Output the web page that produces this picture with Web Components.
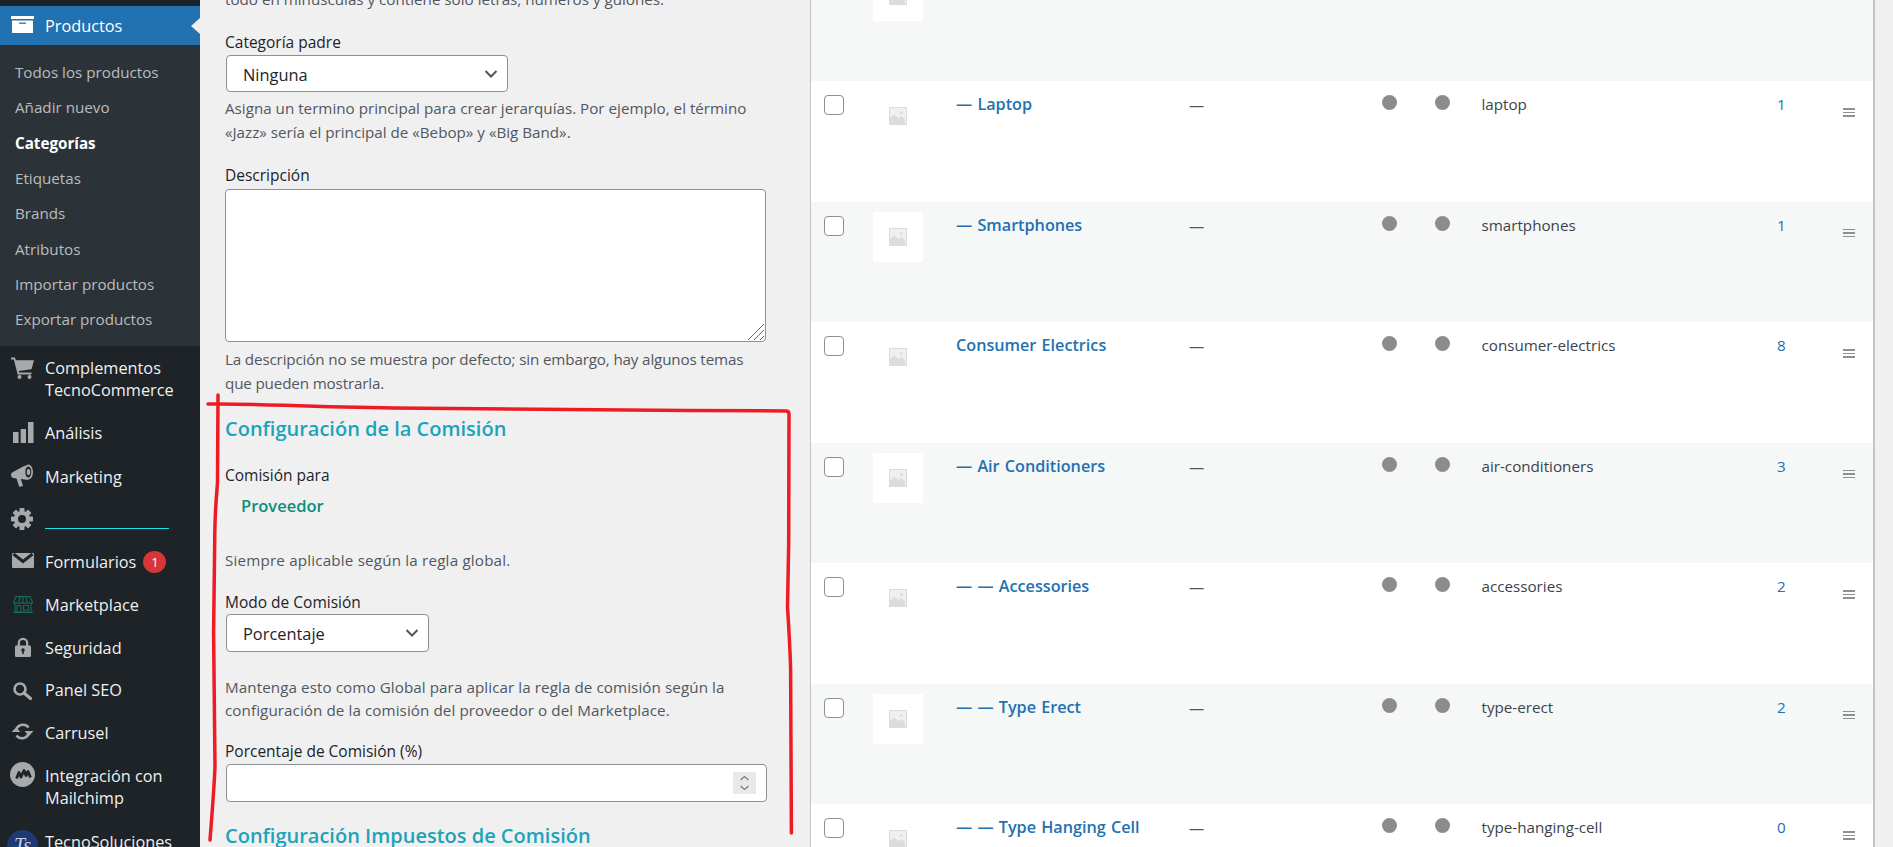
<!DOCTYPE html>
<html lang="es"><head><meta charset="utf-8"><title>Categorías</title>
<style>
html,body{margin:0;padding:0;height:847px;overflow:hidden;background:#f0f0f1;font-family:"Open Sans","Noto Sans",sans-serif;}
</style></head><body>
<app-shell>
  <wp-sidebar slot="side">
    <menu-head>Productos</menu-head>
    <wp-submenu>
      <sub-item>Todos los productos</sub-item><sub-item>Añadir nuevo</sub-item><sub-item current>Categorías</sub-item><sub-item>Etiquetas</sub-item><sub-item>Brands</sub-item><sub-item>Atributos</sub-item><sub-item>Importar productos</sub-item><sub-item>Exportar productos</sub-item>
    </wp-submenu>
    <menu-item icon="cart" h="65">Complementos<br>TecnoCommerce</menu-item>
    <menu-item icon="bars" h="44">Análisis</menu-item>
    <menu-item icon="mega" h="44">Marketing</menu-item>
    <menu-item icon="gear" h="42"><cyan-rule></cyan-rule></menu-item>
    <menu-item icon="mail" h="42">Formularios<count-badge>1</count-badge></menu-item>
    <menu-item icon="store" h="43">Marketplace</menu-item>
    <menu-item icon="lock" h="43">Seguridad</menu-item>
    <menu-item icon="search" h="42">Panel SEO</menu-item>
    <menu-item icon="sync" h="44">Carrusel</menu-item>
    <menu-item icon="chimp" h="64">Integración con<br>Mailchimp</menu-item>
    <menu-item icon="ts" h="46">TecnoSoluciones</menu-item>
  </wp-sidebar>
  <term-form slot="form">
    <f-hint style="margin-top:-13px;height:24px">todo en minúsculas y contiene solo letras, números y guiones.</f-hint>
    <f-label style="margin-top:21px">Categoría padre</f-label>
    <f-select style="margin-top:3px;width:282px;height:37px">Ninguna</f-select>
    <f-hint style="margin-top:4px">Asigna un termino principal para crear jerarquías. Por ejemplo, el término «Jazz» sería el principal de «Bebop» y «Big Band».</f-hint>
    <f-label style="margin-top:21px">Descripción</f-label>
    <f-area style="margin-top:4px"></f-area>
    <f-hint style="margin-top:5px;letter-spacing:-.15px">La descripción no se muestra por defecto; sin embargo, hay algunos temas que pueden mostrarla.</f-hint>
    <f-heading style="margin-top:20px">Configuración de la Comisión</f-heading>
    <f-label style="margin-top:22px">Comisión para</f-label>
    <f-tag style="margin-top:11px">Proveedor</f-tag>
    <f-hint style="margin-top:32px;letter-spacing:.18px">Siempre aplicable según la regla global.</f-hint>
    <f-label style="margin-top:20px">Modo de Comisión</f-label>
    <f-select style="margin-top:2px;width:203px;height:38px">Porcentaje</f-select>
    <f-hint tight style="margin-top:23.500px;letter-spacing:.08px">Mantenga esto como Global para aplicar la regla de comisión según la configuración de la comisión del proveedor o del Marketplace.</f-hint>
    <f-label style="margin-top:19.500px">Porcentaje de Comisión (%)</f-label>
    <f-number style="margin-top:3px"></f-number>
    <f-heading style="margin-top:20px">Configuración Impuestos de Comisión</f-heading>
  </term-form>
  <term-table slot="table">
    <cat-row alt thumb-only></cat-row>
    <cat-row name="— Laptop" slug="laptop" count="1"></cat-row>
    <cat-row alt name="— Smartphones" slug="smartphones" count="1"></cat-row>
    <cat-row name="Consumer Electrics" slug="consumer-electrics" count="8"></cat-row>
    <cat-row alt name="— Air Conditioners" slug="air-conditioners" count="3"></cat-row>
    <cat-row name="— — Accessories" slug="accessories" count="2"></cat-row>
    <cat-row alt name="— — Type Erect" slug="type-erect" count="2"></cat-row>
    <cat-row name="— — Type Hanging Cell" slug="type-hanging-cell" count="0"></cat-row>
  </term-table>
  <red-scribble slot="mark"></red-scribble>
</app-shell>
<script>
const G='#a7aaad',D='#1d2327';
const ICONS={
 cart:[23,22,10.5+0,`<path fill="${G}" d="M0 .5h4l.8 2.800H23l-2.500 9L7.800 14l.4 1.500H20.500v2H6.700L2.800 2.500H0z"/><circle cx="8.500" cy="20" r="2" fill="${G}"/><circle cx="18.500" cy="20" r="2" fill="${G}"/>`],
 bars:[21,21,0,`<path fill="${G}" d="M0 10h5.500v11H0zM7.700 7h5.300v14H7.700zM15 0h5.500v21H15z"/>`],
 mega:[22,23,0,`<path fill="${G}" d="M0 10.500Q0 9 1.500 8.300L14 1.500l3 14.500-7.200-1 2.200 7-3.800.8L5.500 14.500 2 14Q0 13 0 10.500z"/><ellipse cx="17.300" cy="8" rx="4.700" ry="7.500" fill="${G}"/><ellipse cx="17.300" cy="8" rx="3" ry="5.600" fill="${D}"/><ellipse cx="17.500" cy="8" rx="1.800" ry="3" fill="${G}"/>`],
 gear:[22,22,0,`<g fill="${G}"><circle cx="11" cy="11" r="8"/><rect x="8.500" y="0" width="5" height="22" rx=".8"/><rect x="8.500" y="0" width="5" height="22" rx=".8" transform="rotate(45 11 11)"/><rect x="8.500" y="0" width="5" height="22" rx=".8" transform="rotate(90 11 11)"/><rect x="8.500" y="0" width="5" height="22" rx=".8" transform="rotate(135 11 11)"/></g><circle cx="11" cy="11" r="4" fill="${D}"/>`],
 mail:[22,15,0,`<rect width="22" height="15" rx="1" fill="${G}"/><path d="M1.500 1l9.500 7.500L20.500 1" fill="none" stroke="${D}" stroke-width="3"/>`],
 store:[20,17,0,`<g fill="none" stroke="#1a6b55" stroke-width="1.100"><path d="M3 .6h14l2.600 5.900q-2 1.800-3.200 0-1.600 1.800-3.200 0-1.500 1.800-3.200 0-1.700 1.800-3.200 0-1.600 1.800-3.200 0-1.200 1.800-3.200 0zM7 .6 5.800 6.500M10 .6v5.900M13 .6l1.200 5.900M2 8v8h16V8M0 16.500h20M4 9.500h4v6.500H4zM10.500 9.500h5v4.500h-5z"/></g>`],
 lock:[16,20,0,`<path d="M3.800 10V6a4.200 4.200 0 0 1 8.400 0v4" fill="none" stroke="${G}" stroke-width="2.200"/><rect y="8.500" width="16" height="11.500" rx="1.200" fill="${G}"/><circle cx="8" cy="13" r="1.800" fill="${D}"/><rect x="7.200" y="13" width="1.600" height="4" fill="${D}"/>`],
 search:[19,18,0,`<circle cx="7" cy="7" r="5.500" fill="none" stroke="${G}" stroke-width="2.600"/><path d="M11 11l6.500 5.500" stroke="${G}" stroke-width="3.200" stroke-linecap="round"/>`],
 sync:[23,17,0,`<path d="M5 8A7 7 0 0 1 17.500 4.500M18 9A7 7 0 0 1 5.500 12.500" fill="none" stroke="${G}" stroke-width="2.600"/><path fill="${G}" d="M.5 9l4.500-4.500L9.500 9zM13.500 8l9 0-4.500 5z"/>`],
 chimp:[25,25,0,`<circle cx="12.500" cy="12.500" r="12.500" fill="${G}"/><path d="M6.500 16.500 9 10.500l2 4.500 3-6.500 2 5 2-4 2.500 6" fill="none" stroke="${D}" stroke-width="2.800" stroke-linejoin="round"/>`],
 ts:[31,31,0,`<circle cx="15.500" cy="15.500" r="15.500" fill="#1d3a72"/><text x="15.500" y="22" text-anchor="middle" font-family="Liberation Serif,serif" font-style="italic" font-size="20" fill="#c3cde0">Ts</text>`]
};
const POS={cart:[11,-10.5],bars:[12.5,-.5],mega:[11,-1.500],gear:[11,-1],mail:[12,-1.500],store:[13,0],lock:[15,-.5],search:[13,.5],sync:[11,-1.500],chimp:[10,-12.500],ts:[7,3.500]};
function def(name,html,extra){
  const t=document.createElement('template');t.innerHTML=html;
  customElements.define(name,class extends HTMLElement{
    constructor(){super();this.attachShadow({mode:'open'}).appendChild(t.content.cloneNode(true));}
    connectedCallback(){if(extra)extra(this,this.shadowRoot);}
  });
}
def('app-shell',`<style>:host{display:flex;position:relative;width:1893px;height:847px;overflow:hidden}</style><slot name="side"></slot><slot name="form"></slot><slot name="table"></slot><slot name="mark"></slot>`);
def('wp-sidebar',`<style>:host{display:block;flex:none;width:200px;height:847px;background:#1d2327;padding-top:6px;box-sizing:border-box;overflow:hidden;color:#f0f0f1}</style><slot></slot>`);
def('menu-head',`<style>:host{display:flex;align-items:center;position:relative;height:39px;background:#2271b1;color:#fff;font-size:16.300px;padding-left:45px}
 svg{position:absolute;left:11px;top:10px}
 i{position:absolute;right:0;top:12px;border:solid transparent;border-width:8px 9px 8px 0;border-right-color:#f0f0f1}</style>
 <svg width="23" height="18" viewBox="0 0 23 18"><rect x="0" y="0" width="23" height="3" fill="#fff"/><path fill="#fff" d="M1 4.500h21V17H1z"/><rect x="8" y="6.500" width="7" height="1.300" fill="#2271b1"/></svg><slot></slot><i></i>`);
def('wp-submenu',`<style>:host{display:block;background:#2c3338;height:301px;padding-top:9.500px;box-sizing:border-box}</style><slot></slot>`);
def('sub-item',`<style>:host{display:flex;align-items:center;height:35.300px;padding-left:15px;color:#b9bcbf;font-size:15.200px}
 :host([current]){color:#fff;font-weight:700}</style><slot></slot>`);
def('menu-item',`<style>:host{display:flex;align-items:center;position:relative;padding-left:45px;line-height:22px;color:#f0f0f1;font-size:16.300px;box-sizing:border-box;white-space:nowrap}
 svg{position:absolute}</style><svg></svg><div><slot></slot></div>`,(el,s)=>{
   el.style.height=el.getAttribute('h')+'px';
   const k=el.getAttribute('icon'),ic=ICONS[k],sv=s.querySelector('svg'),o=POS[k];
   sv.setAttribute('width',ic[0]);sv.setAttribute('height',ic[1]);sv.setAttribute('viewBox','0 0 '+ic[0]+' '+ic[1]);sv.innerHTML=ic[3];
   sv.style.left=o[0]+'px';sv.style.top='calc(50% - '+ic[1]/2+'px + '+o[1]+'px)';
 });
def('cyan-rule',`<style>:host{display:block;width:124px;height:1px;background:#18e0ee;margin-top:17px}</style>`);
def('count-badge',`<style>:host{display:inline-flex;align-items:center;justify-content:center;width:23px;height:22px;margin-left:7px;border-radius:50%;background:#d63638;color:#fff;font-size:13px;vertical-align:1px;line-height:22px}</style><slot></slot>`);
def('term-form',`<style>:host{display:block;flex:none;width:610px;height:847px;padding-left:25px;box-sizing:border-box;color:#1d2327}</style><slot></slot>`);
def('f-hint',`<style>:host{display:block;width:540px;line-height:24px;color:#50575e;font-size:15.200px;white-space:normal}
 :host([tight]){line-height:23px}</style><slot></slot>`);
def('f-label',`<style>:host{display:block;line-height:20px;color:#1d2327;font-size:15.500px}</style><slot></slot>`);
def('f-heading',`<style>:host{display:block;line-height:28px;font-size:20px;font-weight:600;color:#1ba3ba;white-space:nowrap}</style><slot></slot>`);
def('f-tag',`<style>:host{display:block;line-height:20px;padding-left:16px;font-size:16.500px;font-weight:600;color:#0e8c7c}</style><slot></slot>`);
def('f-select',`<style>:host{display:flex;align-items:center;margin-left:1px;box-sizing:border-box;border:1px solid #8c8f94;border-radius:4px;background:#fff;padding:1px 0 0 16px;font-size:16.400px;color:#1d2327;position:relative}
 svg{position:absolute;right:9px;top:calc(50% - 5px)}</style><slot></slot><svg width="14" height="10" viewBox="0 0 14 10"><path d="M1.500 2l5.500 5.500L12.500 2" fill="none" stroke="#50575e" stroke-width="2"/></svg>`);
def('f-area',`<style>:host{display:block;position:relative;box-sizing:border-box;width:540.500px;height:153px;border:1px solid #8c8f94;border-radius:4px;background:#fff}
 svg{position:absolute;right:0;bottom:0}</style><svg width="18" height="18" viewBox="0 0 18 18"><path d="M1 17 17 1M7 17 17 7M13 17 17 13" stroke="#6a6d70" stroke-width="1" fill="none"/></svg>`);
def('f-number',`<style>:host{display:block;position:relative;box-sizing:border-box;margin-left:1px;width:540.500px;height:38px;border:1px solid #8c8f94;border-radius:4px;background:#fff}
 b{position:absolute;right:9.500px;top:7px;width:23px;height:22px;background:#e9e9ea;display:flex}</style><b><svg width="23" height="22" viewBox="0 0 23 22"><path d="M7.500 8l4-3.500 4 3.500M7.500 14l4 3.500 4-3.500" fill="none" stroke="#7d7d7d" stroke-width="1.300"/></svg></b>`);
def('term-table',`<style>:host{display:block;flex:none;width:1065px;height:887px;margin-top:-39.500px;box-sizing:border-box;border-left:1px solid #c3c4c7;border-right:2px solid #c3c4c7}</style><slot></slot>`);
const PH='<svg width="18" height="18" viewBox="0 0 18 18"><rect width="18" height="18" fill="#dcdcde"/><rect x="1" y="1" width="16" height="16" fill="#f0f0f1"/><path d="M1 11l4-3.500 4.500 3.500 3-2 3.500 3v5H1z" fill="#dcdcde"/><circle cx="12.500" cy="5.500" r="1.500" fill="#dcdcde"/></svg>';
def('cat-row',`<style>:host{display:grid;grid-template-columns:62px 83px 233px 192.700px 53.300px 46.500px 295.500px 66.500px 1fr;height:120.500px;background:#fff;color:#3c434a;font-size:15.200px}
 :host([alt]){background:#f6f7f7}
 .c{padding-top:14px;line-height:20px}
 .t{padding-top:13px}
 .cb{display:block;margin-left:13px;width:20px;height:20px;box-sizing:border-box;border:1px solid #8c8f94;border-radius:4px;background:#fff}
 .th{width:50px;height:50px;background:#fff;margin-top:10px;display:flex;align-items:flex-start;justify-content:center;padding-top:16px;box-sizing:border-box}
 .nm{color:#2271b1;font-weight:600;font-size:16.200px;white-space:nowrap;word-spacing:1px}
 .dot{display:block;width:15px;height:15px;border-radius:50%;background:#8c8c8c}
 .ct{color:#2271b1}
 .hd{display:flex;flex-direction:column;gap:2px;padding-top:27px;width:12px}
 .hd i{display:block;height:1.500px;background:#8c8f94}
 .d{color:#50575e}</style>
 <div class="c"><span class="cb"></span></div><div><div class="th">${PH}</div></div>
 <div class="c t nm"></div><div class="c d"></div><div class="c"><span class="dot"></span></div><div class="c"><span class="dot"></span></div><div class="c t s"></div><div class="c t ct"></div><div class="hd"><i></i><i></i><i></i></div>`,
 (el,s)=>{
   if(el.hasAttribute('thumb-only'))return;
   s.querySelector('.nm').textContent=el.getAttribute('name');
   s.querySelector('.d').textContent='—';
   s.querySelector('.s').textContent=el.getAttribute('slug');
   s.querySelector('.ct').textContent=el.getAttribute('count');
 });
def('red-scribble',`<style>:host{position:absolute;left:0;top:0;width:1893px;height:847px;pointer-events:none}svg{display:block}</style>
 <svg width="1893" height="847" fill="none" stroke="#ed1c24" stroke-width="3.500" stroke-linecap="round" stroke-linejoin="round">
 <path d="M218 395 217.500 483C216 500 215 515 214.800 533L213.600 633 215 767C214 790 212 815 210 840"/>
 <path d="M208 404C250 403 300 407 394 408C500 410 650 410 786 411Q789 411 789 414L788.700 543 787.500 607C789 630 790 650 790.600 667L791.400 833"/>
 </svg>`);
</script>
</body></html>
